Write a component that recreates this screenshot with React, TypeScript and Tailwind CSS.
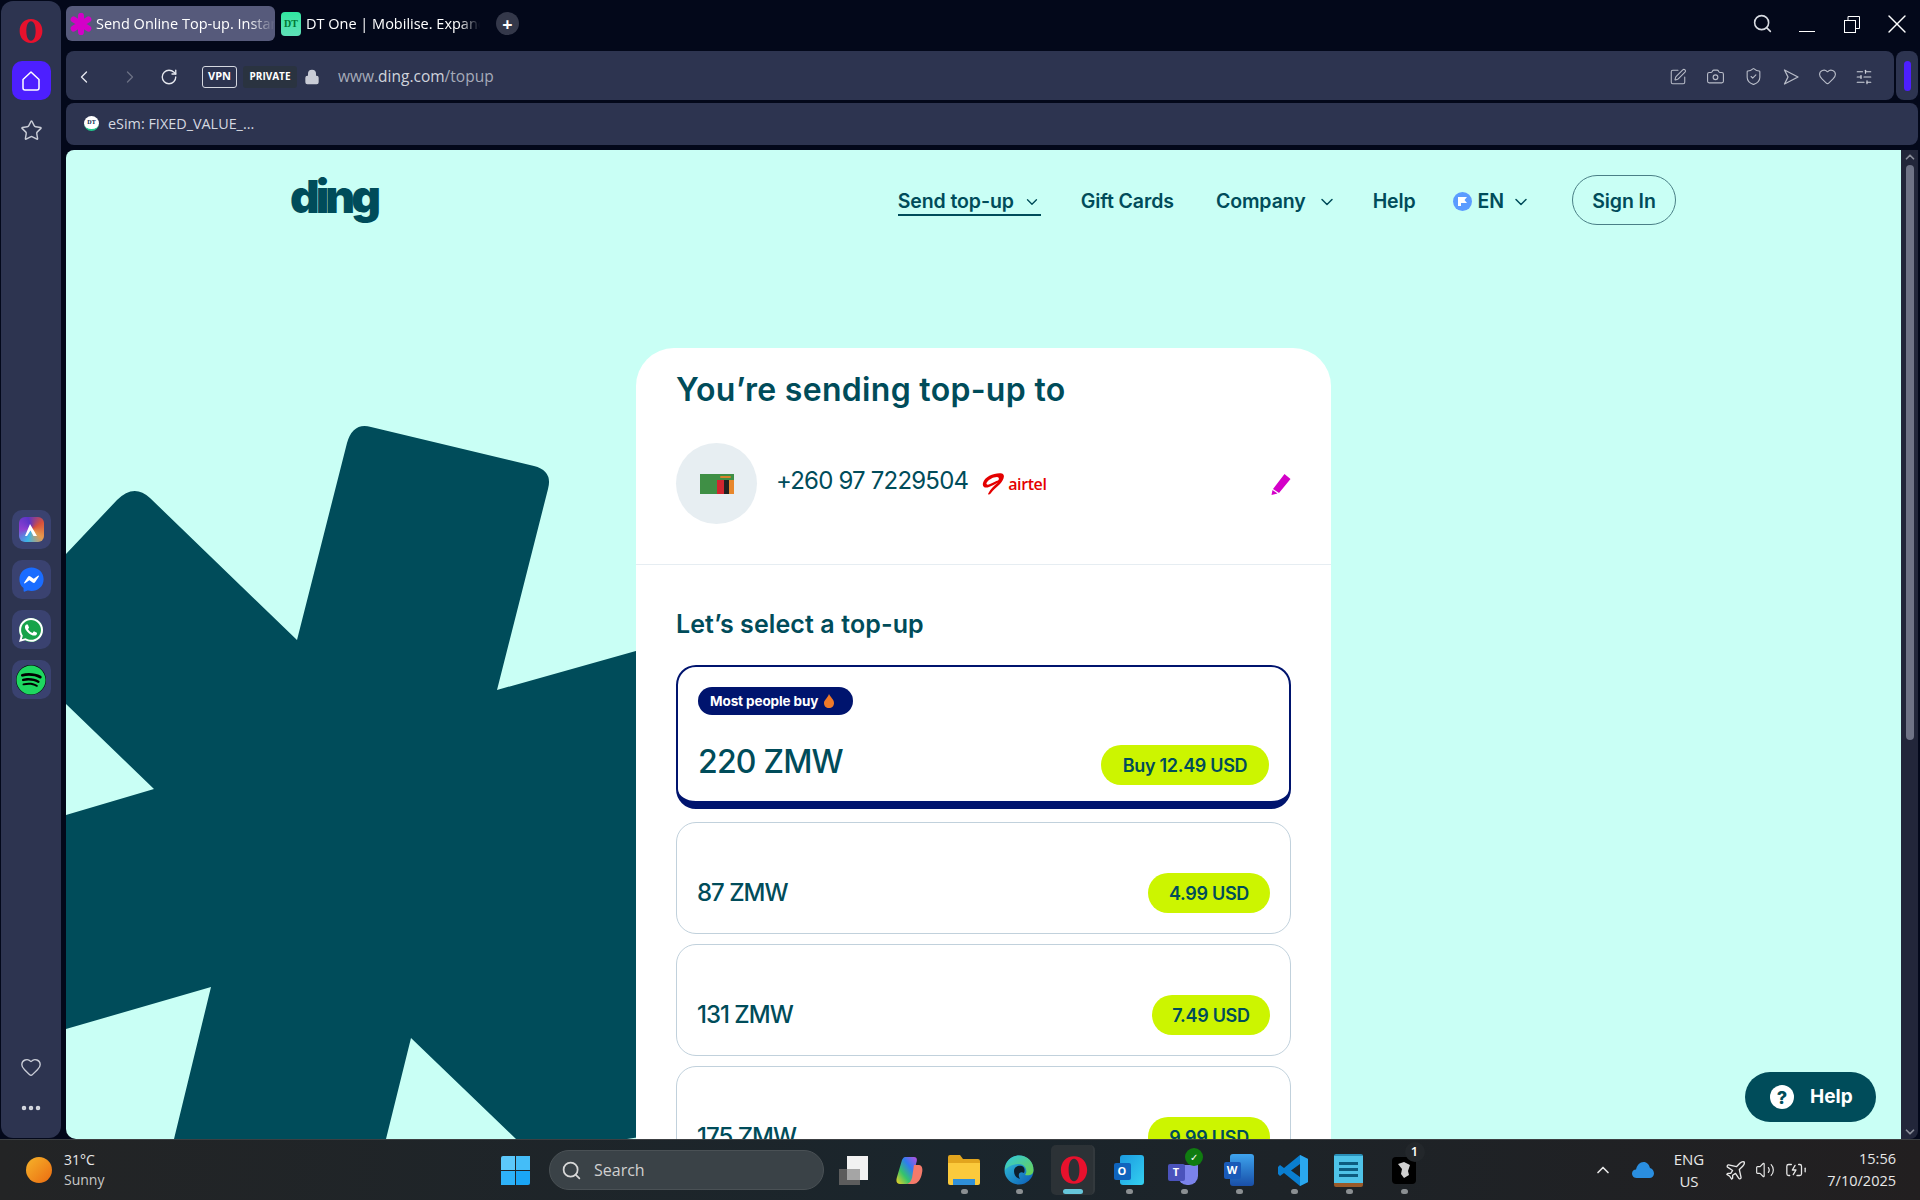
import React from "react";
import { ChevronLeft, ChevronRight, RotateCw, Lock, Search, Heart, Star, Camera, ShieldCheck, SlidersHorizontal, ChevronDown, ChevronUp, X, Volume2, Plane, BatteryCharging, SquarePen, MoreHorizontal } from "lucide-react";
import { FaFacebookMessenger, FaWhatsapp, FaSpotify } from "react-icons/fa";

const Asterisk = () => (
  <svg className="absolute left-0 top-0" width="600" height="989" viewBox="0 0 600 989">
    <path
      fill="#004c5a"
      d="M0 404 L51 350 Q68 333 84 348 L231 490 L281 293 Q287 272 305 277 L468 316 Q487 321 482 339 L431 540 L620 487 L620 980 L561 989 L450 989 L345 888 L320 989 L108 989 L145 837 L0 879 L0 665 L88 639 L0 554 Z"
    />
  </svg>
);

const Opera = ({ s = 26 }: { s?: number }) => (
  <svg width={s} height={s} viewBox="0 0 24 24">
    <path fillRule="evenodd" fill="#e8112d" d="M12 1C5.5 1 1.5 6 1.5 12s4 11 10.500 11 10.500-5 10.500-11S18.500 1 12 1Zm0 2c2.800 0 4.300 4 4.300 9s-1.500 9-4.300 9-4.300-4-4.300-9 1.500-9 4.300-9Z" />
  </svg>
);

const Flag = () => (
  <div className="w-[34px] h-[20px] bg-[#3f8f45] flex flex-col items-end">
    <div className="w-[17px] h-[6px] flex items-center justify-center"><div className="w-[11px] h-[2px] rounded-full bg-[#d9822b]" /></div>
    <div className="flex h-[14px]">
      <div className="w-[7px] bg-[#d22630]" />
      <div className="w-[5px] bg-[#222]" />
      <div className="w-[5px] bg-[#e8872c]" />
    </div>
  </div>
);

const Amount = ({ name, price, w }: { name: string; price: string; w: string }) => (
  <div className="h-[112px] rounded-[20px] border border-[#c1d1dc] flex items-end justify-between pl-[20px] pr-[20px] pb-[20px] shrink-0">
    <span className="mb-[2px] text-[24px] leading-[36px] font-medium text-[#004c5a] tracking-[-1px]">{name}</span>
    <span className={`${w} h-[40px] rounded-full bg-[#ccf500] flex items-center justify-center text-[18px] font-semibold text-[#004c5a] tracking-[-0.3px]`}>{price}</span>
  </div>
);

const NavItem = ({ label }: { label: string }) => (
  <span className="block pt-[3px] text-[19.500px] font-semibold text-[#004c5a] tracking-[-0.1px] whitespace-nowrap">{label}</span>
);

const NavChevron = ({ className }: { className: string }) => (
  <ChevronDown className={className} size={20} color="#004c5a" strokeWidth={1.8} />
);

const SideApp = ({ children }: { children: React.ReactNode }) => (
  <div className="w-[39px] h-[39px] rounded-[10px] bg-[#3a4270] flex items-center justify-center">{children}</div>
);

const TbItem = ({ children, dot = true, active = false }: { children: React.ReactNode; dot?: boolean; active?: boolean }) => (
  <div className="w-[55px] h-[50px] flex items-center justify-center relative">
    {active && <div className="absolute left-[5px] right-[6px] top-0 bottom-0 rounded-[5px] bg-[#2c3236] border-r-2 border-[#33393d]" />}
    <div className="relative">{children}</div>
    {dot && !active && <div className="absolute left-[25px] bottom-[1px] w-[7px] h-[5px] rounded-full bg-[#8b8f92]" />}
    {active && <div className="absolute left-[17px] bottom-[1px] w-[20px] h-[5px] rounded-full bg-[#66c6da]" />}
  </div>
);

export default function App() {
  return (
    <div className="w-[1920px] h-[1200px] overflow-hidden flex flex-col bg-[#03081a] font-['Open_Sans',sans-serif]">
      <div className="flex h-[1139px] shrink-0">
        {/* Sidebar */}
        <aside className="ml-px mt-px w-[60px] h-[1137px] rounded-[12px] bg-[#2d3450] flex flex-col items-center shrink-0">
          <div className="mt-[17px] h-[26px] flex items-center justify-center"><Opera s={26} /></div>
          <div className="mt-[17px] w-[39px] h-[39px] rounded-[10px] bg-[#4d1fff] flex items-center justify-center">
            <svg width="24" height="24" viewBox="0 0 24 24" fill="none" stroke="#fff" strokeWidth="1.500" strokeLinejoin="round"><path d="M12 3 L20 10.500 V19 Q20 21 18 21 H6 Q4 21 4 19 V10.500 Z" /></svg>
          </div>
          <Star className="mt-[19px]" size={23} color="#c9ccd6" strokeWidth={1.5} />
          <div className="mt-[368px] flex flex-col gap-[11px]">
            <SideApp>
              <div className="w-[25px] h-[25px] rounded-[6px] bg-[conic-gradient(from_200deg,#3ab6e8,#8e3fd0,#5a34c8,#d8503a,#e59a4e,#3ab6e8)] flex items-center justify-center">
                <svg width="16" height="16" viewBox="0 0 16 16"><path d="M7 2 L14 14 H10.500 L7.500 8.500 L4 14 H2 Z" fill="#fff" /></svg>
              </div>
            </SideApp>
            <SideApp>
              <div className="relative w-[25px] h-[25px]">
                <div className="absolute left-[4px] top-[6px] w-[17px] h-[13px] bg-white" />
                <FaFacebookMessenger className="relative" size={25} color="#1a6cff" />
              </div>
            </SideApp>
            <SideApp>
              <div className="w-[24px] h-[24px] rounded-full bg-[#17a34a] flex items-center justify-center"><FaWhatsapp size={28} color="#fff" /></div>
            </SideApp>
            <SideApp>
              <div className="w-[30px] h-[30px] rounded-full bg-black flex items-center justify-center"><FaSpotify size={30} color="#1ed760" /></div>
            </SideApp>
          </div>
          <Heart className="mt-[357px]" size={22} color="#c9ccd6" strokeWidth={1.5} />
          <MoreHorizontal className="mt-[18px]" size={24} color="#d5d8e0" strokeWidth={2.5} />
        </aside>

        {/* Browser column */}
        <div className="ml-[5px] mr-[2px] flex-1 flex flex-col min-w-0">
          {/* Tabs */}
          <div className="h-[51px] shrink-0 pt-[6px] flex items-start">
            <div className="w-[209px] h-[35px] rounded-[6px] bg-[#565a7b] flex items-center pl-[4px] gap-[4px] overflow-hidden">
              <svg width="22" height="22" viewBox="0 0 24 24" className="shrink-0" stroke="#d400c8" strokeWidth="6.500" strokeLinecap="round"><path d="M12 3 V21 M4 7 L20 17 M20 7 L4 17" /></svg>
              <span className="min-w-0 text-[14.500px] text-white whitespace-nowrap [mask-image:linear-gradient(to_right,black_85%,transparent)] overflow-hidden">Send Online Top-up. Instant</span>
            </div>
            <div className="w-[205px] h-[35px] flex items-center pl-[6px] gap-[5px] overflow-hidden">
              <span className="w-[20px] h-[24px] rounded-[4px] bg-gradient-to-b from-[#2ee8a0] to-[#5fe0b8] text-[10px] font-['Liberation_Serif',serif] font-bold text-[#073] flex items-center justify-center shrink-0">DT</span>
              <span className="min-w-0 text-[14.500px] text-white whitespace-nowrap [mask-image:linear-gradient(to_right,black_88%,transparent)] overflow-hidden">DT One | Mobilise. Expand.</span>
            </div>
            <div className="ml-[16px] mt-[6px] w-[23px] h-[23px] rounded-full bg-[#34384a] text-white flex items-center justify-center text-[18px] font-bold leading-none">+</div>
            <div className="flex-1" />
            <Search className="mt-[7px] mr-[26px]" size={21} color="#d8dbe2" strokeWidth={1.8} />
            <div className="mt-[25px] mr-[29px] w-[16px] h-px bg-white" />
            <svg className="mt-[10px] mr-[21px]" width="16" height="17" viewBox="0 0 16 17" fill="none" stroke="#fff" strokeWidth="1"><rect x="0.500" y="4.500" width="11" height="12" /><path d="M4 4 V0.500 H15.500 V12.500 H12" /></svg>
            <X className="mt-[2px] mr-[5px]" size={32} color="#fff" strokeWidth={1} />
          </div>

          {/* Address */}
          <div className="flex h-[49px] gap-[2px] shrink-0">
            <div className="flex-1 rounded-[8px] bg-[#2d3450] flex items-center pl-[8px] pr-[21px] pt-[2px]">
              <ChevronLeft size={20} color="#e6e8ef" strokeWidth={1.6} />
              <ChevronRight className="ml-[26px]" size={20} color="#6b7084" strokeWidth={1.6} />
              <RotateCw className="ml-[20px]" size={18} color="#e6e8ef" strokeWidth={1.8} />
              <span className="ml-[24px] w-[35px] h-[22px] border border-[#d5d8e0] rounded-[3px] text-[11px] font-bold text-white flex items-center justify-center">VPN</span>
              <span className="ml-[6px] w-[54px] h-[22px] rounded-[3px] bg-[#2a3340] text-[10px] font-bold text-white flex items-center justify-center">PRIVATE</span>
              <Lock className="ml-[7px]" size={16} color="#c9ccd6" fill="#c9ccd6" strokeWidth={2} />
              <span className="ml-[18px] text-[15.500px] text-[#a6abb9]">www.<span className="text-[#d0d3dc]">ding.com</span>/topup</span>
              <div className="flex-1" />
              <SquarePen size={18} color="#b8bcc8" strokeWidth={1.4} />
              <Camera className="ml-[19px]" size={19} color="#b8bcc8" strokeWidth={1.4} />
              <ShieldCheck className="ml-[19px]" size={19} color="#b8bcc8" strokeWidth={1.4} />
              <svg className="ml-[19px]" width="18" height="18" viewBox="0 0 18 18" fill="none" stroke="#b8bcc8" strokeWidth="1.300" strokeLinejoin="round"><path d="M2.500 2 L16 9 L2.500 16 L6 9 Z" /></svg>
              <Heart className="ml-[18px]" size={19} color="#b8bcc8" strokeWidth={1.4} />
              <SlidersHorizontal className="ml-[18px]" size={18} color="#d0d3dc" strokeWidth={1.6} />
            </div>
            <div className="w-[22px] rounded-[8px] bg-[#2d3450] flex items-center justify-center">
              <div className="w-[7px] h-[30px] rounded-full bg-[#4d1fff]" />
            </div>
          </div>

          {/* Bookmarks */}
          <div className="mt-[3px] h-[42px] shrink-0 rounded-[8px] bg-[#2d3450] flex items-center pl-[18px] pb-[1px]">
            <span className="w-[15px] h-[15px] rounded-full bg-white border-b-2 border-[#22c58a] text-[6px] font-bold text-[#024] flex items-center justify-center font-['Liberation_Serif',serif]">DT</span>
            <span className="ml-[9px] text-[14.400px] text-[#d5d8e0]">eSim: FIXED_VALUE_...</span>
          </div>

          {/* Page + scrollbar */}
          <div className="mt-[5px] flex-1 flex min-h-0">
            <main className="relative flex-1 overflow-hidden bg-[#c9fff5] rounded-tl-[8px] rounded-bl-[10px] font-['Inter',sans-serif]">
              <Asterisk />
              <nav className="relative h-[100px] pl-[224px] pr-[225px] flex items-center">
                <span className="text-[46px] font-black text-[#004c5a] tracking-[-4px] leading-none pb-[8px]">ding</span>
                <div className="flex-1" />
                <div className="flex items-center border-b-2 border-[#004c5a] h-[32px] w-[143px] gap-[9px] pt-[2px]">
                  <NavItem label="Send top-up" />
                  <NavChevron className="mt-[3px]" />
                </div>
                <div className="ml-[40px]"><NavItem label="Gift Cards" /></div>
                <div className="ml-[42px] flex items-center gap-[11px]"><NavItem label="Company" /><NavChevron className="mt-[3px]" /></div>
                <div className="ml-[36px]"><NavItem label="Help" /></div>
                <div className="ml-[37px] flex items-center gap-[6px]">
                  <svg className="mt-[3px]" width="19" height="19" viewBox="0 0 19 19"><circle cx="9.500" cy="9.500" r="9.500" fill="#5b9cff" /><path d="M5 5 H14 L11.500 8 L14 11 H8 V14 H5 Z" fill="#fff" /></svg>
                  <NavItem label="EN" />
                  <NavChevron className="ml-[1px] mt-[3px]" />
                </div>
                <div className="ml-[41px] w-[104px] h-[50px] rounded-full border border-[#4a7f86] flex items-center justify-center"><NavItem label="Sign In" /></div>
              </nav>

              <section className="relative mt-[98px] mx-auto w-[695px] bg-white rounded-t-[38px] h-[900px]">
                <div className="px-[40px] pt-[22px]">
                  <h1 className="text-[32px] leading-[40px] font-semibold text-[#004c5a] tracking-[0.3px]">You’re sending top-up to</h1>
                  <div className="mt-[33px] h-[81px] flex items-center">
                    <div className="w-[81px] h-[81px] rounded-full bg-[#e7eef2] flex items-center justify-center"><Flag /></div>
                    <span className="ml-[19px] text-[24px] text-[#004c5a] tracking-[-0.8px] pb-[5px]">+260 97 7229504</span>
                    <div className="ml-[14px] flex items-center">
                      <svg width="25" height="22" viewBox="0 0 25 22"><path fill="#e40000" d="M20 0.500 C13 -0.500 3 3 1 10 C0 14 3 15.500 7 14 C10 13 13 11 16 9.500 C13 12 9 15 6 21 C6.500 22 8 21.500 9 20 C11 17 15 14 18 11 C21 8 24 2 20 0.500 Z M15 4 C11 4 6 7 4.500 10 C4 12 6 12 8 11 C11 9.500 14 8 16 7.500 C17.500 6 17 4 15 4 Z" fillRule="evenodd" /></svg>
                      <span className="text-[16px] font-semibold text-[#e40000] tracking-[-0.4px] ml-[1px] font-['Open_Sans',sans-serif]">airtel</span>
                    </div>
                    <div className="flex-1" />
                    <svg width="20" height="22" viewBox="0 0 20 22"><path fill="#d400c8" d="M13.500 1 L19.500 6 L8 20 L2 16 Z M1.500 17 L6.500 20.500 L0.500 22 Z" /></svg>
                  </div>
                </div>
                <div className="mt-[40px] h-px bg-[#e6edf2]" />
                <div className="px-[40px]">
                  <h2 className="pt-[43px] text-[25px] leading-[32px] font-semibold text-[#004c5a] tracking-[0.1px]">Let’s select a top-up</h2>
                  <div className="mt-[25px] flex flex-col">
                    <div className="h-[144px] rounded-[20px] border-2 border-b-[8px] border-[#00146e] pl-[20px] pr-[20px] pt-[20px] flex flex-col shrink-0">
                      <div className="w-[155px] h-[28px] rounded-full bg-[#00146e] flex items-center pl-[12px] gap-[6px] text-[13.500px] font-bold text-white tracking-[-0.1px]">
                        Most people buy
                        <svg width="10" height="14" viewBox="0 0 10 14"><path fill="#f07a28" d="M5 0 C6 3 10 5 10 9 C10 12 8 14 5 14 C2 14 0 12 0 9 C0 6 3 5 5 0 Z" /></svg>
                      </div>
                      <div className="mt-[29px] flex items-start justify-between">
                        <span className="text-[32px] leading-[36px] font-medium text-[#004c5a] tracking-[-0.8px]">220 ZMW</span>
                        <span className="mt-[1px] w-[168px] h-[40px] rounded-full bg-[#ccf500] flex items-center justify-center text-[18px] font-semibold text-[#004c5a] tracking-[-0.3px]">Buy 12.49 USD</span>
                      </div>
                    </div>
                    <div className="mt-[13px] flex flex-col gap-[10px]">
                      <Amount name="87 ZMW" price="4.99 USD" w="w-[122px]" />
                      <Amount name="131 ZMW" price="7.49 USD" w="w-[118px]" />
                      <Amount name="175 ZMW" price="9.99 USD" w="w-[122px]" />
                    </div>
                  </div>
                </div>
              </section>

              <div className="absolute right-[25px] bottom-[17px] w-[131px] h-[50px] rounded-full bg-[#004c5a] flex items-center pl-[25px] gap-[16px]">
                <span className="w-[24px] h-[24px] rounded-full bg-white text-[#004c5a] flex items-center justify-center text-[18px] font-extrabold">?</span>
                <span className="text-[19px] font-bold text-white">Help</span>
              </div>
            </main>
            <div className="w-[17px] bg-[#22263a] flex flex-col items-center rounded-br-[8px]">
              <ChevronUp size={14} color="#8a8d99" strokeWidth={3} />
              <div className="mt-[1px] w-[8px] h-[575px] rounded-full bg-[#6f7386]" />
              <div className="flex-1" />
              <ChevronDown size={14} color="#8a8d99" strokeWidth={3} />
            </div>
          </div>
        </div>
      </div>

      {/* Taskbar */}
      <footer className="h-[61px] shrink-0 border-t border-[#3c3f42] bg-gradient-to-r from-[#232425] via-[#1a252c] to-[#221f20] flex items-center font-['Open_Sans',sans-serif] text-[#e8e8e8]">
        <div className="ml-[26px] w-[26px] h-[26px] rounded-full bg-gradient-to-br from-[#f5b32a] to-[#ea6a10]" />
        <div className="ml-[12px] w-[60px] flex flex-col text-[14px] leading-[20px]">
          <span>31°C</span>
          <span className="text-[#c8c8c8]">Sunny</span>
        </div>
        <div className="ml-[364px] w-[55px] flex justify-center">
          <div className="w-[29px] h-[29px] grid grid-cols-2 grid-rows-2 gap-[1px]">
            <div className="bg-[#5cc8fa] rounded-tl-[2px]" /><div className="bg-[#44bdf8]" /><div className="bg-[#2eb2f8]" /><div className="bg-[#1aa6f5] rounded-br-[2px]" />
          </div>
        </div>
        <div className="ml-[6px] w-[275px] h-[40px] rounded-full bg-[#3a4247] border border-[#4a5155] flex items-center pl-[11px] gap-[12px]">
          <Search size={21} color="#d8d8d8" strokeWidth={2} />
          <span className="text-[16px] text-[#d0d0d0]">Search</span>
        </div>
        <div className="ml-[2px] flex items-center h-[50px]">
          <TbItem dot={false}>
            <svg width="30" height="30" viewBox="0 0 30 30"><rect x="0" y="14" width="21" height="16" fill="#5c5c5c" /><rect x="8" y="1" width="21" height="24" fill="#f2f2f2" /><rect x="8" y="14" width="13" height="11" fill="#a5a5a5" /></svg>
          </TbItem>
          <TbItem dot={false}>
            <svg width="28" height="30" viewBox="0 0 28 30">
              <defs><linearGradient id="cp" x1="0" y1="1" x2="1" y2="0"><stop offset="0" stopColor="#f5d020" /><stop offset=".35" stopColor="#35c46b" /><stop offset=".65" stopColor="#2f7cf0" /><stop offset="1" stopColor="#c04fe0" /></linearGradient></defs>
              <path fill="url(#cp)" d="M10 2 H19 C23 2 22 6 21 9 L17 26 C16 28 14 29 12 29 H5 C1 29 1 25 2 22 L7 5 C8 3 9 2 10 2 Z" />
              <path fill="#f47a6a" d="M19 10 H24 C27 10 28 14 27 18 C26 24 23 29 18 29 H12 C15 28 16 26 17 23 Z" />
            </svg>
          </TbItem>
          <TbItem>
            <svg width="34" height="32" viewBox="0 0 34 32"><path fill="#e2a51e" d="M1 3 Q1 1 3 1 H13 L16 5 H31 Q33 5 33 7 V10 H1 Z" /><path fill="#fbca3c" d="M1 9 H33 V29 Q33 31 31 31 H3 Q1 31 1 29 Z" /><rect x="6" y="25" width="22" height="6" fill="#2f8fd8" /></svg>
          </TbItem>
          <TbItem>
            <svg width="30" height="30" viewBox="0 0 30 30">
              <defs><linearGradient id="ed1" x1="0" y1="0" x2="1" y2="1"><stop offset="0" stopColor="#33c6d8" /><stop offset="1" stopColor="#0b59b8" /></linearGradient><linearGradient id="ed2" x1="0" y1="0" x2="1" y2="1"><stop offset="0" stopColor="#2fc7e0" /><stop offset="1" stopColor="#6ed24c" /></linearGradient></defs>
              <circle cx="15" cy="15" r="14.500" fill="url(#ed1)" />
              <path fill="url(#ed2)" d="M15 .5 C24 .5 29.500 7 29.500 15 C29.500 20 25 21 21 20 C24 17 22 9 15 9 C9 9 3 12 1 15 C1 7 7 .5 15 .5 Z" />
              <path fill="#0d1f2d" d="M10 16 C10 12 14 10 18 11 C21 12 21 16 20 18 C16 16 13 19 16 24 C12 23 10 20 10 16 Z" />
            </svg>
          </TbItem>
          <TbItem active><Opera s={30} /></TbItem>
          <TbItem>
            <div className="w-[30px] h-[30px] relative">
              <div className="absolute right-0 top-0 w-[24px] h-[30px] rounded-[3px] bg-gradient-to-br from-[#1c9ae0] to-[#35d0f0]" />
              <div className="absolute left-0 top-[8px] w-[17px] h-[17px] rounded-[2px] bg-[#0f64bd] text-white text-[11px] font-bold flex items-center justify-center">O</div>
            </div>
          </TbItem>
          <TbItem>
            <div className="w-[32px] h-[32px] relative">
              <div className="absolute right-[2px] top-[11px] w-[20px] h-[20px] rounded-b-[9px] bg-[#7b83eb]" />
              <div className="absolute left-0 top-[10px] w-[17px] h-[17px] rounded-[2px] bg-[#4b53bc] text-white text-[11px] font-bold flex items-center justify-center">T</div>
              <div className="absolute left-[17px] -top-[6px] w-[18px] h-[18px] rounded-full bg-[#107c10] text-white text-[10px] flex items-center justify-center">✓</div>
            </div>
          </TbItem>
          <TbItem>
            <div className="w-[30px] h-[32px] relative">
              <div className="absolute right-0 top-0 w-[24px] h-[32px] rounded-[3px] bg-gradient-to-b from-[#3fa4ee] to-[#1a4fa8]" />
              <div className="absolute left-0 top-[8px] w-[17px] h-[17px] rounded-[2px] bg-[#1a5ab8] text-white text-[11px] font-bold flex items-center justify-center">W</div>
            </div>
          </TbItem>
          <TbItem>
            <svg width="31" height="31" viewBox="0 0 31 31"><path fill="#0a7ed0" d="M22 0 L30 4 V27 L22 31 L6 18 L2 21 L0 19 V12 L2 10 L6 13 Z M22 9 L13 15.500 L22 22 Z" /><path fill="#2aa7ee" d="M22 0 L30 4 V27 L22 31 Z" /></svg>
          </TbItem>
          <TbItem>
            <div className="w-[29px] h-[33px] rounded-[2px] bg-[#4fc3e8] flex flex-col items-center justify-center gap-[3px] border-b-[4px] border-[#9a5a2a] border-t-2 border-t-[#2a8fb8]">
              <div className="w-[19px] h-[3px] bg-[#0d5c80]" />
              <div className="w-[19px] h-[3px] bg-[#0d5c80]" />
              <div className="w-[19px] h-[3px] bg-[#0d5c80]" />
            </div>
          </TbItem>
          <TbItem>
            <div className="w-[24px] h-[27px] rounded-[4px] bg-black flex items-center justify-center relative">
              <svg width="14" height="18" viewBox="0 0 14 18"><path fill="#d0d0d0" d="M1 3 L7 1 L13 4 L11 10 L12 14 L7 17 L4 13 L5 8 Z" /></svg>
              <span className="absolute -right-[9px] -top-[15px] w-[20px] h-[20px] rounded-full bg-[#23272b] text-[13px] text-white font-semibold flex items-center justify-center">1</span>
            </div>
          </TbItem>
        </div>
        <div className="flex-1" />
        <ChevronUp size={20} color="#e8e8e8" strokeWidth={2} />
        <svg className="ml-[19px]" width="22" height="16" viewBox="0 0 22 16"><path fill="#2a8ee0" d="M4.500 16 C1 16 0 13 0 11.500 C0 9 2 7.500 4 7.500 C5 3 8 0 11.500 0 C15 0 17 2.500 18 6 C20.500 6.500 22 9 22 11.500 C22 14 20 16 17.500 16 Z" /></svg>
        <div className="ml-[18px] w-[34px] flex flex-col items-center text-[15px] leading-[22px]"><span>ENG</span><span>US</span></div>
        <Plane className="ml-[18px]" size={23} color="#e8e8e8" strokeWidth={1.4} />
        <Volume2 className="ml-[8px]" size={20} color="#e8e8e8" strokeWidth={1.4} />
        <BatteryCharging className="ml-[10px]" size={22} color="#e8e8e8" strokeWidth={1.4} />
        <div className="ml-[13px] mr-[24px] w-[76px] flex flex-col items-end text-[14.500px] leading-[22px] whitespace-nowrap"><span>15:56</span><span>7/10/2025</span></div>
      </footer>
    </div>
  );
}
